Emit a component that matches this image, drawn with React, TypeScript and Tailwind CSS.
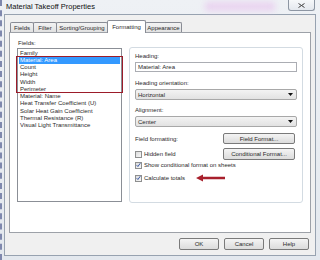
import React from "react";

const font = { fontFamily: '"Liberation Sans", Arial, sans-serif' };

function Check({ checked }: { checked: boolean }) {
  return (
    <div className="w-[7px] h-[7px] border border-[#8e8f8f] bg-gradient-to-br from-[#dcdcdc] to-[#f8f8f8] flex items-center justify-center shrink-0">
      {checked && (
        <svg width="6" height="6" viewBox="0 0 6 6">
          <path d="M0.8 3.2 L2.3 4.8 L5.2 0.8" stroke="#2a4a9e" strokeWidth="1.1" fill="none" />
        </svg>
      )}
    </div>
  );
}

function Select({ value }: { value: string }) {
  return (
    <div className="h-[11px] mt-[2px] border border-[#a8a8a8] rounded-[2px] bg-gradient-to-b from-[#f3f3f3] to-[#e2e2e2] flex items-center justify-between pl-[2px] pr-[3px]">
      <span>{value}</span>
      <svg width="5" height="3" viewBox="0 0 5 3">
        <path d="M0 0 L5 0 L2.5 3 Z" fill="#111" />
      </svg>
    </div>
  );
}

function Btn({ label, cls }: { label: string; cls: string }) {
  return (
    <div
      className={
        "border border-[#7a7a7a] rounded-[2px] bg-gradient-to-b from-[#f4f4f4] to-[#dcdcdc] flex items-center justify-center text-[#2a2a2a] " +
        cls
      }
    >
      {label}
    </div>
  );
}

export default function App() {
  const fields = [
    "Family",
    "Material: Area",
    "Count",
    "Height",
    "Width",
    "Perimeter",
    "Material: Name",
    "Heat Transfer Coefficient (U)",
    "Solar Heat Gain Coefficient",
    "Thermal Resistance (R)",
    "Visual Light Transmittance",
  ];
  const tabs = [
    { t: "Fields", w: "w-[24px]" },
    { t: "Filter", w: "w-[24px]" },
    { t: "Sorting/Grouping", w: "w-[52px]" },
    { t: "Formatting", w: "w-[39px]", sel: true },
    { t: "Appearance", w: "w-[37px]" },
  ];
  return (
    <div
      className="w-[320px] h-[260px] relative overflow-hidden bg-gradient-to-b from-[#eef1f5] to-[#e3e8ee] text-[6px] text-[#2a2a2a] leading-none"
      style={font}
    >
      {/* left glass edge */}
      <div className="absolute left-0 top-0 bottom-0 w-[2px] border-l-2 border-dashed border-[#7f88ad]" />
      {/* pink blur in glass */}
      <div className="absolute left-[205px] top-[2px] w-[70px] h-[9px] bg-[#e8c6ee] blur-[3px] opacity-70" />

      {/* title bar */}
      <div className="h-[14px] relative flex items-center pl-[6px]">
        <span className="text-[7.5px] text-[#111]">Material Takeoff Properties</span>
        <div className="absolute right-[5px] top-0 w-[27px] h-[11px] border border-t-0 border-[#8d96a3] rounded-b-[3px] bg-gradient-to-b from-[#f6f8fa] to-[#e4e8ee] flex items-center justify-center">
          <svg width="7" height="5" viewBox="0 0 7 5">
            <path d="M0.5 0.5 L6.5 4.5 M6.5 0.5 L0.5 4.5" stroke="#444" strokeWidth="1" fill="none" />
          </svg>
        </div>
      </div>

      {/* client area */}
      <div className="ml-[4px] w-[312px] h-[242px] border border-[#97a2b0] bg-[#f0f0f0] flex flex-col">
        {/* tabs */}
        <div className="pl-[5px] pt-[5px] h-[17px] flex items-end">
          {tabs.map((tab, i) =>
            tab.sel ? (
              <div
                key={i}
                className={
                  "-ml-px h-[13px] -mb-px relative z-10 bg-white border border-b-0 border-[#898c95] rounded-t-[2px] flex items-center justify-center pb-[1px] " +
                  tab.w
                }
              >
                {tab.t}
              </div>
            ) : (
              <div
                key={i}
                className={
                  (i === 0 ? "" : "-ml-px ") +
                  "h-[10px] bg-gradient-to-b from-[#f3f3f3] to-[#e1e1e1] border border-b-0 border-[#898c95] rounded-t-[2px] flex items-center justify-center " +
                  tab.w
                }
              >
                {tab.t}
              </div>
            )
          )}
        </div>

        {/* panel */}
        <div className="ml-[4px] w-[302px] h-[201px] bg-white border border-[#9da1a8] flex items-start pl-[7px] pt-[6px]">
          {/* left column */}
          <div className="flex flex-col">
            <div className="h-[8px] flex items-center pl-[1px]">Fields:</div>
            <div className="mt-[1px] w-[105px] h-[154px] border border-[#8b8f96] relative">
              {fields.map((f, i) => (
                <div
                  key={i}
                  className={
                    "h-[7.25px] mx-[1px] pl-[1px] flex items-center whitespace-nowrap " +
                    (i === 1 ? "bg-[#3399ff] text-white" : "")
                  }
                >
                  {f}
                </div>
              ))}
              {/* red annotation box */}
              <div className="absolute left-[-2px] top-[6.5px] w-[107px] h-[37px] border-[1.5px] border-[#9c1c2a]" />
            </div>
          </div>

          {/* right group box */}
          <div className="ml-[7px] mt-[8px] w-[174px] h-[156px] border border-[#d3dbe2] rounded-[3px] flex flex-col pl-[5px] pr-[5px]">
            <div className="h-[8px] mt-[4px] flex items-center">Heading:</div>
            <div className="h-[10px] mt-[2px] border border-[#abadb3] bg-white flex items-center pl-[2px]">
              Material: Area
            </div>
            <div className="h-[8px] mt-[7px] flex items-center">Heading orientation:</div>
            <Select value="Horizontal" />
            <div className="h-[8px] mt-[6px] flex items-center">Alignment:</div>
            <Select value="Center" />
            <div className="h-[11px] mt-[6px] flex items-center justify-between">
              <span>Field formatting:</span>
              <Btn label="Field Format..." cls="w-[72px] h-[11px] mr-[2px]" />
            </div>
            <div className="h-[12px] mt-[4px] flex items-center justify-between">
              <div className="flex items-center gap-[2px]">
                <Check checked={false} />
                <span>Hidden field</span>
              </div>
              <Btn label="Conditional Format..." cls="w-[72px] h-[12px] mr-[2px]" />
            </div>
            <div className="h-[8px] mt-[1px] flex items-center gap-[2px]">
              <Check checked={true} />
              <span>Show conditional format on sheets</span>
            </div>
            <div className="h-[8px] mt-[5px] flex items-center gap-[2px]">
              <Check checked={true} />
              <span>Calculate totals</span>
              <svg className="ml-[9px]" width="29" height="8" viewBox="0 0 29 8">
                <path d="M0 4 L7 0.5 L7 2.8 L29 2.8 L29 5.2 L7 5.2 L7 7.5 Z" fill="#a8202c" />
              </svg>
            </div>
          </div>
        </div>

        {/* bottom buttons */}
        <div className="mt-[5px] flex justify-end gap-[5px] pr-[6px]">
          <Btn label="OK" cls="w-[40px] h-[12px]" />
          <Btn label="Cancel" cls="w-[40px] h-[12px]" />
          <Btn label="Help" cls="w-[40px] h-[12px]" />
        </div>
      </div>
    </div>
  );
}
